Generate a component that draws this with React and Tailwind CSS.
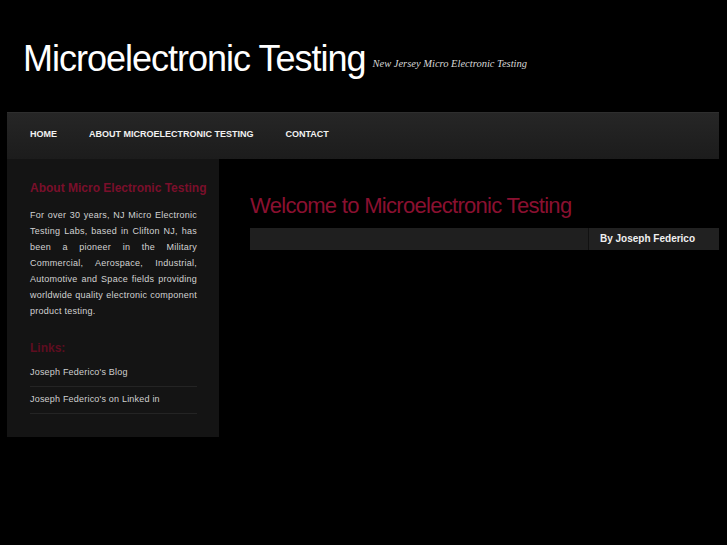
import React from "react";

const links = ["Joseph Federico's Blog", "Joseph Federico's on Linked in"];

const App = () => {
  return (
    <div className="bg-black min-h-screen font-['Liberation_Sans',Arial,sans-serif] text-white">
      {/* Header */}
      <div className="h-[112px] pl-[23px] pt-[41px]">
        <div className="flex items-end">
          <h1 className="text-[36px] leading-none tracking-[-1px] text-white h-[36px]">Microelectronic Testing</h1>
          <span className="ml-[7px] mb-[8px] text-[10.5px] leading-none italic text-[#d8d8d8] font-['Liberation_Serif',serif]">
            New Jersey Micro Electronic Testing
          </span>
        </div>
      </div>

      {/* Nav */}
      <div className="mx-[7px] w-[712px] h-[47px] bg-gradient-to-b from-[#262626] to-[#1c1c1c] border-t border-[#2e2e2e] flex items-center pl-[23px] pb-[4px] gap-8">
        {["HOME", "ABOUT MICROELECTRONIC TESTING", "CONTACT"].map((n) => (
          <span key={n} className="text-[9px] font-bold text-[#f2f2f2] leading-none">{n}</span>
        ))}
      </div>

      <div className="flex w-[719px]">
        {/* Sidebar */}
        <div className="ml-[7px] w-[212px] bg-[#141414] pl-[23px] pt-[21px] pb-[23px]">
          <h3 className="text-[12px] leading-[16px] font-bold text-[#7a0f2b] whitespace-nowrap">About Micro Electronic Testing</h3>
          <p className="mt-[11px] w-[167px] text-[9px] leading-[16px] tracking-[0.25px] text-[#d2d2d2] text-justify">
            For over 30 years, NJ Micro Electronic Testing Labs, based in Clifton NJ, has been a pioneer in the Military Commercial, Aerospace, Industrial, Automotive and Space fields providing worldwide quality electronic component product testing.
          </p>
          <h3 className="mt-[21px] text-[12px] leading-[16px] font-bold text-[#5f0d20]">Links:</h3>
          <ul className="mt-[4px] w-[167px]">
            {links.map((l) => (
              <li key={l} className="h-[27px] flex items-center border-b border-[#242424] text-[9px] tracking-[0.2px] text-[#cfcfcf]">
                {l}
              </li>
            ))}
          </ul>
        </div>

        {/* Main */}
        <div className="flex-1 pl-[31px]">
          <h2 className="mt-[36px] text-[22px] leading-none tracking-[-0.7px] text-[#8a1030]">Welcome to Microelectronic Testing</h2>
          <div className="mt-[11px] h-[22px] bg-[#1f1f1f] flex">
            <div className="flex-1"></div>
            <div className="w-[131px] border-l border-[#111] bg-[#212121] pl-[11px] pb-[1px] flex items-center text-[10px] font-bold text-[#f0f0f0]">
              By Joseph Federico
            </div>
          </div>
        </div>
      </div>
    </div>
  );
};

export default App;
